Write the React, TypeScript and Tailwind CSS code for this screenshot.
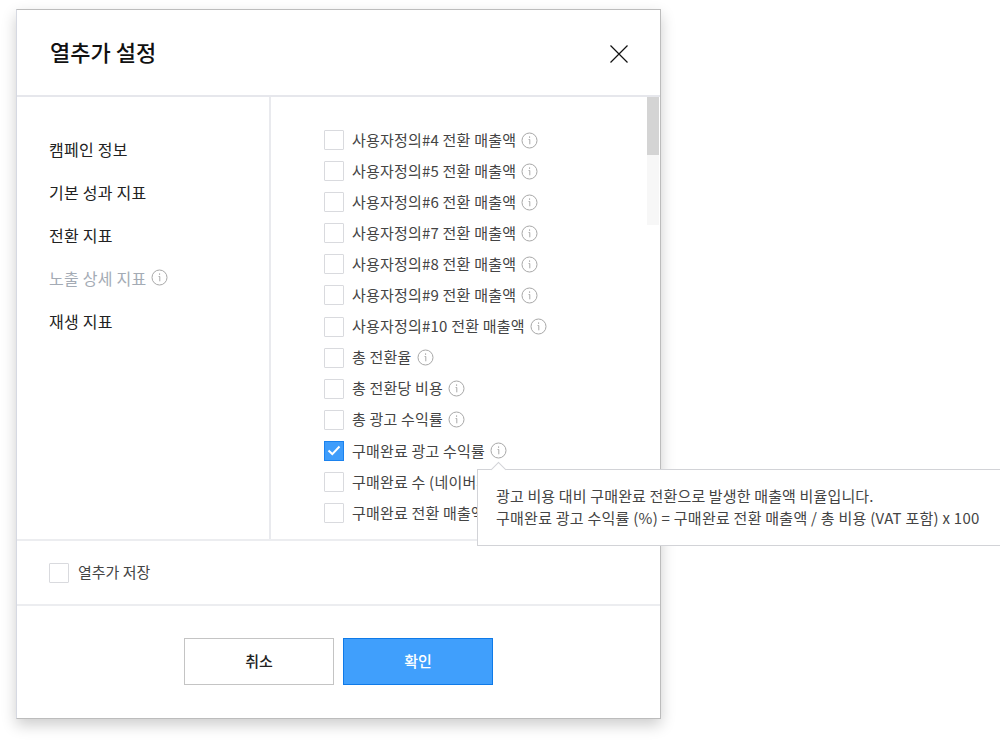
const FONT = "font-['Noto_Sans_CJK_KR','Noto_Sans',sans-serif]"

const rows = [
  { label: '사용자정의#4 전환 매출액', info: true },
  { label: '사용자정의#5 전환 매출액', info: true },
  { label: '사용자정의#6 전환 매출액', info: true },
  { label: '사용자정의#7 전환 매출액', info: true },
  { label: '사용자정의#8 전환 매출액', info: true },
  { label: '사용자정의#9 전환 매출액', info: true },
  { label: '사용자정의#10 전환 매출액', info: true },
  { label: '총 전환율', info: true },
  { label: '총 전환당 비용', info: true },
  { label: '총 광고 수익률', info: true },
  { label: '구매완료 광고 수익률', info: true, checked: true },
  { label: '구매완료 수 (네이버페이)', info: false },
  { label: '구매완료 전환 매출액', info: false },
]

const menu = ['캠페인 정보', '기본 성과 지표', '전환 지표', '노출 상세 지표', '재생 지표']

function InfoIcon({ color = '#a8a8a8' }: { color?: string }) {
  return (
    <svg width="17" height="17" viewBox="0 0 17 17" fill="none" className="shrink-0">
      <circle cx="8.5" cy="8.5" r="7.5" stroke={color} strokeWidth="1" />
      <path d="M7.6 7.5h1.2v4.8" stroke={color} strokeWidth="1" />
      <rect x="8" y="4.4" width="1.1" height="1.4" fill={color} />
    </svg>
  )
}

function Checkbox({ checked = false }: { checked?: boolean }) {
  if (checked) {
    return (
      <span className="flex h-5 w-5 shrink-0 items-center justify-center border border-[#1b82ee] bg-[#3f9dfb]">
        <svg width="14" height="11" viewBox="0 0 14 11" fill="none">
          <path d="M1.5 5.5l3.8 3.6 7.2-7.6" stroke="#fff" strokeWidth="2" />
        </svg>
      </span>
    )
  }
  return <span className="block h-5 w-5 shrink-0 rounded-[1px] border border-[#d9dade] bg-white" />
}

export default function App() {
  return (
    <div className={`relative h-[741px] w-[1000px] overflow-hidden bg-white pl-4 pt-[9px] ${FONT}`}>
      <div className="flex h-[710px] w-[645px] flex-col border border-[#bcbcbc] border-l-[#d6d9e2] bg-white shadow-[0_6px_14px_rgba(0,0,0,0.2)]">
        {/* 헤더 */}
        <div className="flex h-[87px] shrink-0 items-center justify-between border-b-2 border-[#e6e7ec] pl-[33px] pr-[31px]">
          <h2 className="-mt-[3px] text-[22px] font-medium text-[#111]">열추가 설정</h2>
          <svg width="20" height="20" viewBox="0 0 20 20" fill="none" className="mt-0.5">
            <path d="M1.5 1.5l17 17M18.5 1.5l-17 17" stroke="#111" strokeWidth="1.2" />
          </svg>
        </div>

        {/* 본문 */}
        <div className="flex h-[444px] shrink-0 border-b-2 border-[#ecedf0]">
          <ul className="w-[254px] shrink-0 border-r-2 border-[#e9eaee] pl-[32px] pt-[30px] text-[16px] tracking-[0.25px] text-[#222]">
            {menu.map((m) => (
              <li key={m} className={`flex h-[43px] items-center gap-[4px] ${m === '노출 상세 지표' ? 'text-[#a4abb5]' : ''}`}>
                {m}
                {m === '노출 상세 지표' && <InfoIcon />}
              </li>
            ))}
          </ul>
          <div className="relative flex-1 overflow-hidden pl-[53px] pt-[27.5px]">
            {rows.map((r) => (
              <div key={r.label} className="flex h-[31.08px] items-center text-[15px] tracking-[0.2px] text-[#444]">
                <Checkbox checked={r.checked} />
                <span className="ml-2 whitespace-nowrap">{r.label}</span>
                {r.info && <span className="ml-[5px]"><InfoIcon /></span>}
              </div>
            ))}
            {/* 스크롤바 */}
            <div className="absolute right-[1px] top-0 h-[128px] w-3 bg-[#f7f7f7]">
              <div className="h-[58px] bg-[#d4d4d4]" />
            </div>
          </div>
        </div>

        {/* 열추가 저장 */}
        <div className="flex h-[65px] shrink-0 items-center border-b-2 border-[#ecedf0] pl-[32px] text-[15px] text-[#444]">
          <Checkbox />
          <span className="ml-[9px]">열추가 저장</span>
        </div>

        {/* 버튼 */}
        <div className="flex flex-1 justify-center gap-[9px] pt-[32px]">
          <button type="button" className="h-[47px] w-[150px] border border-[#c4c4c4] bg-white text-[15px] font-medium text-[#222]">취소</button>
          <button type="button" className="h-[47px] w-[150px] border border-[#0f7ae8] bg-[#409ffc] text-[15px] font-medium text-white">확인</button>
        </div>
      </div>

      {/* 툴팁 */}
      <div className="absolute left-[477px] top-[469px] h-[77px] w-[523px] border border-r-0 border-[#d2d3d7] bg-white pl-[18px] pt-[15px] text-[15px] leading-[22px] text-[#444]">
        <span className="absolute -top-[6px] left-[15px] h-[11px] w-[11px] rotate-45 border-l border-t border-[#d2d3d7] bg-white" />
        <p className="whitespace-nowrap tracking-[0.15px]">광고 비용 대비 구매완료 전환으로 발생한 매출액 비율입니다.</p>
        <p className="whitespace-nowrap tracking-[0.25px]">구매완료 광고 수익률 (%) = 구매완료 전환 매출액 / 총 비용 (VAT 포함) x 100</p>
      </div>
    </div>
  )
}
